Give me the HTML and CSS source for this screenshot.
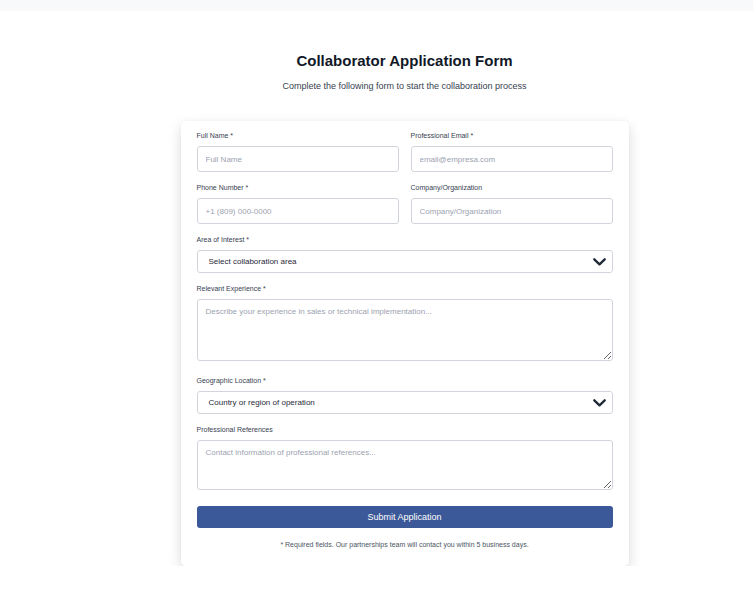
FILE: index.html
```html
<!DOCTYPE html>
<html lang="en">
<head>
<meta charset="utf-8">
<title>Collaborator Application Form</title>
<link rel="stylesheet" href="styles.css">
</head>
<body>
<div class="topbar"></div>
<main class="page">
  <header class="intro">
    <h1 class="title">Collaborator Application Form</h1>
    <p class="subtitle">Complete the following form to start the collaboration process</p>
  </header>
  <form class="card">
    <div class="row">
      <div class="field">
        <label class="label">Full Name *</label>
        <input class="input" type="text" placeholder="Full Name">
      </div>
      <div class="field">
        <label class="label">Professional Email *</label>
        <input class="input" type="email" placeholder="email@empresa.com">
      </div>
    </div>
    <div class="row">
      <div class="field">
        <label class="label">Phone Number *</label>
        <input class="input" type="text" placeholder="+1 (809) 000-0000">
      </div>
      <div class="field">
        <label class="label">Company/Organization</label>
        <input class="input" type="text" placeholder="Company/Organization">
      </div>
    </div>
    <div class="field">
      <label class="label">Area of Interest *</label>
      <div class="select">
        <span class="select-text">Select collaboration area</span>
        <svg class="chevron" width="13" height="8" viewBox="0 0 13 8"><path d="M1.3 1.3 L6.5 6.3 L11.7 1.3" fill="none" stroke="#1f2937" stroke-width="2.3" stroke-linecap="round" stroke-linejoin="round"/></svg>
      </div>
    </div>
    <div class="field field-ta">
      <label class="label">Relevant Experience *</label>
      <textarea class="textarea tall" placeholder="Describe your experience in sales or technical implementation..."></textarea>
    </div>
    <div class="field">
      <label class="label">Geographic Location *</label>
      <div class="select">
        <span class="select-text">Country or region of operation</span>
        <svg class="chevron" width="13" height="8" viewBox="0 0 13 8"><path d="M1.3 1.3 L6.5 6.3 L11.7 1.3" fill="none" stroke="#1f2937" stroke-width="2.3" stroke-linecap="round" stroke-linejoin="round"/></svg>
      </div>
    </div>
    <div class="field field-ta">
      <label class="label">Professional References</label>
      <textarea class="textarea short" placeholder="Contact information of professional references..."></textarea>
    </div>
    <button class="submit" type="button">Submit Application</button>
    <p class="note">* Required fields. Our partnerships team will contact you within 5 business days.</p>
  </form>
</main>
</body>
</html>
```

FILE: styles.css
```css
* { box-sizing: border-box; }
html, body { margin: 0; padding: 0; background: #ffffff; }
body {
  font-family: "Liberation Sans", Arial, sans-serif;
  color: #1f2937;
}
.topbar {
  height: 11px;
  background: #f8f9fb;
}
.page {
  display: flex;
  flex-direction: column;
  align-items: center;
  padding-top: 40px;
  padding-left: 56px;
}
.intro { text-align: center; }
.title {
  margin: 0;
  font-size: 15px;
  line-height: 20px;
  font-weight: 700;
  color: #111827;
}
.subtitle {
  margin: 9px 0 0;
  font-size: 9px;
  line-height: 12px;
  color: #374151;
}
.card {
  margin-top: 29px;
  width: 448px;
  background: #fff;
  border-radius: 5px;
  box-shadow: 0 5px 14px rgba(0,0,0,0.14), 0 0 3px rgba(0,0,0,0.04);
  padding: 10px 16px 16px;
  display: flex;
  flex-direction: column;
}
.row {
  display: grid;
  grid-template-columns: 1fr 1fr;
  column-gap: 12px;
}
.field {
  display: flex;
  flex-direction: column;
  margin-bottom: 11px;
}
.field-ta { margin-bottom: 15px; }
.label {
  font-size: 7px;
  line-height: 10px;
  color: #374151;
  margin-bottom: 5px;
}
.input {
  height: 26px;
  border: 1px solid #d1d5db;
  border-radius: 3px;
  padding: 0 8px;
  font-family: inherit;
  font-size: 8px;
  color: #1f2937;
  outline: none;
  width: 100%;
}
.input::placeholder, .textarea::placeholder { color: #9ca3af; }
.select {
  height: 23px;
  border: 1px solid #d1d5db;
  border-radius: 3px;
  padding: 0 6px 0 11px;
  display: flex;
  align-items: center;
  justify-content: space-between;
}
.select-text {
  font-size: 8px;
  color: #1f2937;
}
.chevron { display: block; }
.textarea {
  display: block;
  width: 100%;
  border: 1px solid #d1d5db;
  border-radius: 3px;
  padding: 7px 8px;
  font-family: inherit;
  font-size: 8px;
  color: #1f2937;
  outline: none;
  resize: vertical;
}
.tall { height: 62px; }
.short { height: 50px; }
.submit {
  margin-top: 1px;
  height: 22px;
  border: none;
  border-radius: 3px;
  background: #3b5998;
  color: #fff;
  font-family: inherit;
  font-size: 9px;
  width: 100%;
}
.note {
  margin: 12px 0 0;
  text-align: center;
  font-size: 7px;
  line-height: 10px;
  color: #4b5563;
}
```
